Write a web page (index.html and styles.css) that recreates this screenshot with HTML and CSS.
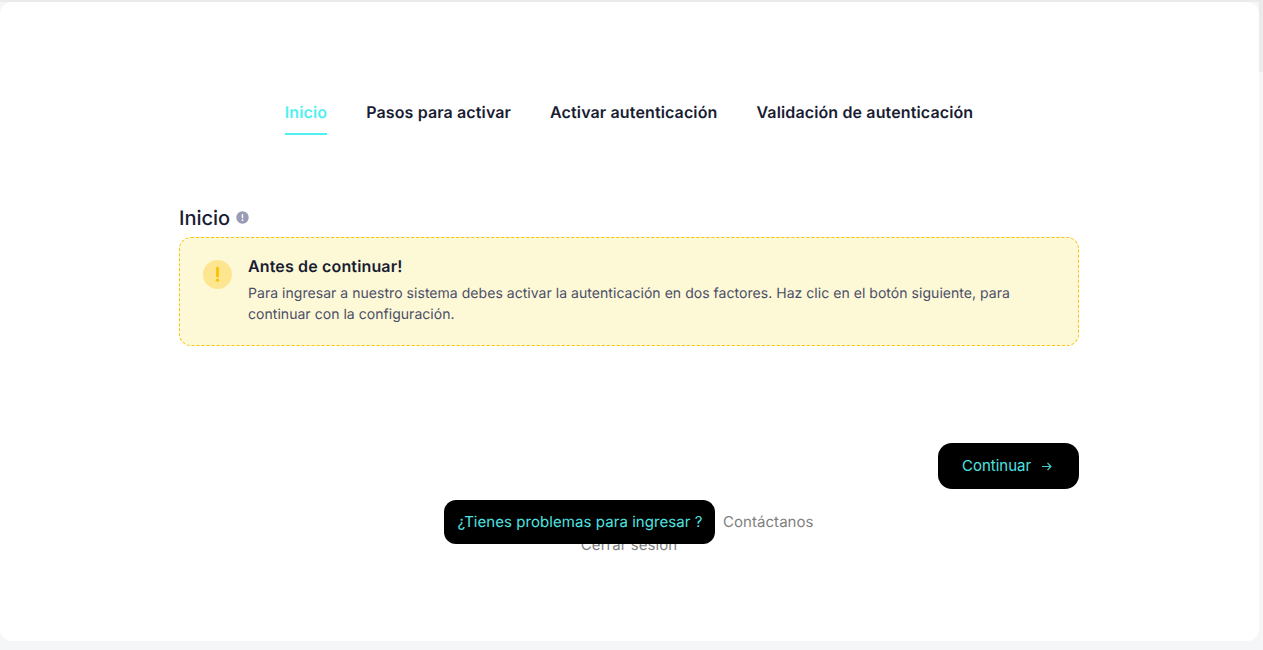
FILE: index.html
```html
<!DOCTYPE html>
<html lang="es">
<head>
<meta charset="utf-8">
<title>Inicio</title>
<link rel="stylesheet" href="styles.css">
</head>
<body>
<div class="page">
  <main class="card">
    <nav class="tabs">
      <a class="tab tab-active">Inicio</a>
      <a class="tab">Pasos para activar</a>
      <a class="tab">Activar autenticación</a>
      <a class="tab">Validación de autenticación</a>
    </nav>
    <section class="content">
      <h1 class="title">Inicio
        <svg class="info" viewBox="0 0 13 13" width="13" height="13" aria-hidden="true"><circle cx="6.5" cy="6.5" r="6.2" fill="#9a9cb5"/><rect x="5.8" y="3" width="1.4" height="4.4" rx=".7" fill="#fff"/><circle cx="6.5" cy="9.2" r=".85" fill="#fff"/></svg>
      </h1>
      <div class="alert">
        <span class="alert-icon">
          <svg viewBox="0 0 29 29" width="29" height="29" aria-hidden="true"><circle cx="14.5" cy="14.5" r="14.5" fill="#fde68f"/><rect x="13" y="6.8" width="3" height="10.5" rx="1.2" fill="#fcc30b"/><circle cx="14.5" cy="20.3" r="1.7" fill="#fcc30b"/></svg>
        </span>
        <div class="alert-body">
          <h2 class="alert-title">Antes de continuar!</h2>
          <p class="alert-text">Para ingresar a nuestro sistema debes activar la autenticación en dos factores. Haz clic en el botón siguiente, para continuar con la configuración.</p>
        </div>
      </div>
      <div class="actions">
        <button class="btn-continue">Continuar
          <svg viewBox="0 0 12 12" width="12" height="12" aria-hidden="true"><path d="M1 6.5H10M6.5 3 10 6.5 6.5 10" fill="none" stroke="#46d0ce" stroke-width="1.1"/></svg>
        </button>
      </div>
      <div class="help">
        <div class="help-line"><a class="help-btn">¿Tienes problemas para ingresar ?</a><a class="help-link">Contáctanos</a></div>
        <a class="logout">Cerrar sesión</a>
      </div>
    </section>
  </main>
  <div class="scrollbar"><div class="thumb"></div></div>
</div>
</body>
</html>
```

FILE: styles.css
```css
* { box-sizing: border-box; }
html, body { margin: 0; height: 100%; overflow: hidden; }
body {
  background: #f5f6f8;
  font-family: Inter, "Liberation Sans", sans-serif;
  color: #181c32;
  text-rendering: geometricPrecision;
}
.page { display: flex; height: 650px; align-items: flex-start; border-top: 2px solid #ebebeb; }
.card {
  width: 1259px;
  height: 639px;
  background: #fff;
  border-radius: 12px;
  padding-top: 98px;
}
.scrollbar { width: 4px; height: 648px; margin-top: -2px; background: #f5f6f8; }
.thumb { height: 72px; background: #ebebeb; }
.tabs { display: flex; justify-content: center; gap: 39px; padding-right: 1px; }
.tab {
  font-size: 16px;
  font-weight: 600;
  line-height: 24px;
  letter-spacing: .13px;
  padding-bottom: 9px;
  color: #181c32;
  border-bottom: 2px solid transparent;
}
.tab-active { color: #50f0f0; border-bottom-color: #50f0f0; }
.content { width: 900px; margin: 70px 0 0 179px; }
.title {
  margin: 0 0 6px;
  font-size: 20px;
  font-weight: 550;
  line-height: 26px;
  display: flex;
  align-items: center;
  gap: 6px;
}
.info { margin-top: -2px; }
.alert {
  display: flex;
  height: 109px;
  padding: 17px 23px;
  gap: 16px;
  background: #fdf8d6;
  border: 1px dashed #fcc30b;
  border-radius: 12px;
}
.alert-icon { flex: none; height: 29px; margin-top: 5px; }
.alert-title { margin: 0 0 6px; font-size: 16px; font-weight: 600; line-height: 22px; letter-spacing: .15px; }
.alert-text { margin: 0; font-size: 14px; font-weight: 400; line-height: 21px; letter-spacing: .04px; color: #4b4e68; }
.actions { display: flex; justify-content: flex-end; margin-top: 97px; }
.btn-continue {
  display: flex;
  align-items: center;
  gap: 10px;
  height: 46px;
  width: 141px;
  padding: 0 24px;
  background: #000;
  color: #4fe3e0;
  border: 0;
  border-radius: 14px;
  font: 400 15px/20px Inter, "Liberation Sans", sans-serif;
}
.help { text-align: center; margin-top: 21px; font-size: 15px; line-height: 23px; letter-spacing: .06px; color: #7e8299; }
.help-line { display: flex; justify-content: center; }
.help-btn {
  position: relative;
  z-index: 1;
  margin: -10px 7.5px -11px 0;
  padding: 10px 13px 11px;
  background: #000;
  color: #4fe3e0;
  border-radius: 12px;
}
.help-link { color: #7f7f7f; }
.logout { color: #7f7f7f; display: block; }
```
